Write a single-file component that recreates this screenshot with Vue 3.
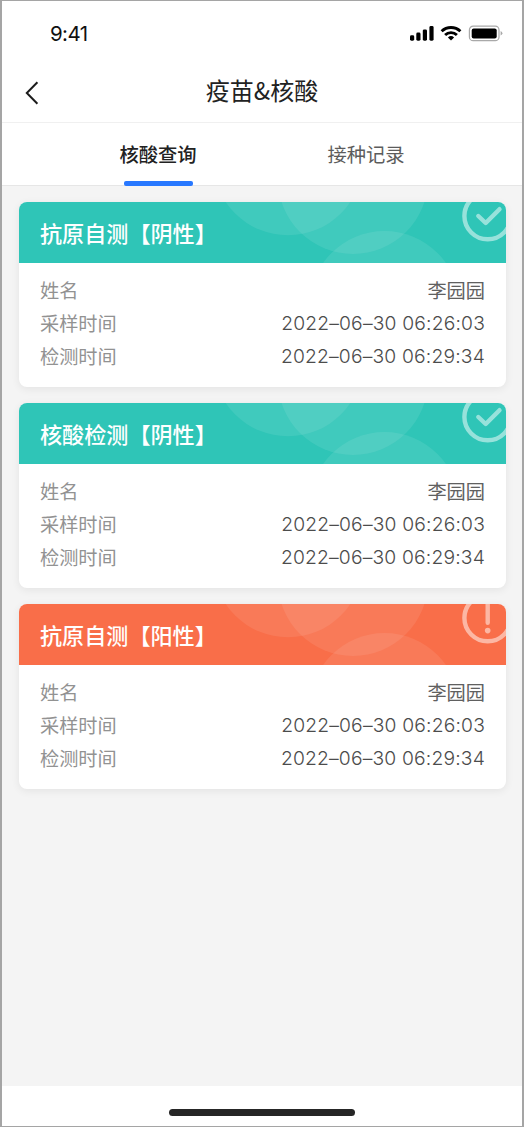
<script setup>
const cards = [
  { id: 1, title: '抗原自测【阴性】', positive: false },
  { id: 2, title: '核酸检测【阴性】', positive: false },
  { id: 3, title: '抗原自测【阳性】', positive: true },
].map((card) => ({
  ...card,
  name: '李园园',
  rows: [
    { label: '采样时间', value: '2022–06–30 06:26:03' },
    { label: '检测时间', value: '2022–06–30 06:29:34' },
  ],
}))
</script>

<template>
  <div class="phone">
    <div class="status">
      <span class="clock">9:41</span>
      <svg class="signals" width="94" height="18" viewBox="0 0 94 18">
        <rect x="0" y="10.3" width="4.2" height="5.4" rx="1.4" />
        <rect x="6.3" y="7.6" width="4.2" height="8.1" rx="1.4" />
        <rect x="12.8" y="4.4" width="4.2" height="11.3" rx="1.4" />
        <rect x="19.4" y="1" width="4.2" height="14.7" rx="1.4" />
        <g fill="none" stroke="#000" stroke-width="2.9">
          <path d="M31.6 6.2a13.6 13.6 0 0 1 18.8 0" />
          <path d="M35.1 10a8.5 8.5 0 0 1 11.8 0" />
        </g>
        <path d="M37.9 12.5a4.6 4.6 0 0 1 6.2 0L41 15.6z" />
        <rect x="59.4" y="1.1" width="29.6" height="14.6" rx="3.8" fill="none" stroke="#a9a9a9" stroke-width="1.2" />
        <rect x="61.7" y="3.4" width="25" height="10" rx="2" />
        <path d="M90.6 6v4.6q1.8-.8 1.8-2.3T90.6 6z" fill="#a9a9a9" />
      </svg>
    </div>
    <header class="nav">
      <svg class="back" width="14" height="24" viewBox="0 0 14 24">
        <path d="M12.4 1.2 1.8 12l10.6 10.8" fill="none" stroke="#1c1c1c" stroke-width="2" />
      </svg>
      <h1>疫苗&amp;核酸</h1>
    </header>
    <nav class="tabs">
      <div class="tab active">核酸查询</div>
      <div class="tab">接种记录</div>
    </nav>
    <main>
      <section v-for="card in cards" :key="card.id" class="card">
        <div class="head" :class="{ positive: card.positive }">
          <svg class="decor" width="487" height="61" viewBox="0 0 487 61">
            <g fill="#fff" fill-opacity=".085">
              <circle cx="269" cy="-41.7" r="75" />
              <circle cx="334" cy="-23" r="75" />
              <circle cx="365.5" cy="104" r="75" />
            </g>
            <g fill="none" stroke="#fff" stroke-opacity=".5" stroke-width="4.4" stroke-linecap="round" stroke-linejoin="round">
              <circle cx="468.7" cy="14" r="23.3" />
              <path v-if="!card.positive" d="m459.3 14 7.4 7 13.8-13.8" />
              <path v-else d="M468.7-2v20.8" />
            </g>
            <circle v-if="card.positive" cx="468.7" cy="26.6" r="2.8" fill="#fff" fill-opacity=".5" />
          </svg>
          <h2>{{ card.title }}</h2>
        </div>
        <dl>
          <div class="row">
            <dt>姓名</dt>
            <dd>{{ card.name }}</dd>
          </div>
          <div v-for="row in card.rows" :key="row.label" class="row">
            <dt>{{ row.label }}</dt>
            <dd class="time">{{ row.value }}</dd>
          </div>
        </dl>
      </section>
    </main>
    <footer><div class="home"></div></footer>
  </div>
</template>

<style>
body {
  background: #fff;
}
</style>

<style scoped>
.phone {
  box-sizing: border-box;
  width: 524px;
  height: 1127px;
  border: 1px solid #a5a5a5;
  border-width: 1px 2px 1px 2px;
  background: #f4f4f4;
  display: flex;
  flex-direction: column;
  font-family: "Liberation Sans", "Noto Sans CJK SC", sans-serif;
}
.status {
  height: 61px;
  flex: none;
  background: #fff;
  display: flex;
  justify-content: space-between;
  align-items: center;
  padding: 4px 18px 0 48px;
  box-sizing: border-box;
}
.clock {
  font: 400 20.5px/24px Inter, sans-serif;
  letter-spacing: -0.6px;
  color: #111;
}
.signals {
  display: block;
}
.nav {
  height: 61px;
  flex: none;
  box-sizing: border-box;
  background: #fff;
  border-bottom: 1px solid #f0f0f0;
  display: grid;
  grid-template-columns: 60px 1fr 60px;
  align-items: center;
}
.back {
  margin: 1px 0 0 23px;
}
h1 {
  margin: 0 0 4px;
  text-align: center;
  font: 400 24px/34px "Noto Sans CJK SC", sans-serif;
  color: #222;
}
.tabs {
  height: 63px;
  flex: none;
  box-sizing: border-box;
  background: #fff;
  border-bottom: 1px solid #e6e6e6;
  display: grid;
  grid-template-columns: 208px 208px;
  justify-content: center;
}
.tab {
  display: flex;
  flex-direction: column;
  align-items: center;
  justify-content: space-between;
  height: 63px;
  padding-top: 17px;
  box-sizing: border-box;
  font: 400 19.3px/28px "Noto Sans CJK SC", sans-serif;
  color: #5c5c5c;
}
.active {
  font-weight: 500;
  color: #222;
}
.active::after {
  content: "";
  width: 69px;
  height: 5px;
  border-radius: 2px;
  background: #2878ff;
}
main {
  flex: 1;
  display: flex;
  flex-direction: column;
  gap: 16px;
  padding: 16px 16px 0 17px;
}
.card {
  height: 185px;
  border-radius: 8px;
  overflow: hidden;
  background: #fff;
  box-shadow: 0 2px 9px rgba(0, 0, 0, 0.07);
}
.head {
  display: grid;
  height: 61px;
  align-items: center;
  background: #2fc5b7;
}
.head.positive {
  background: #f96e49;
}
.decor,
h2 {
  grid-area: 1 / 1;
}
.decor {
  display: block;
}
h2 {
  margin: 0 0 2px 21px;
  font: 500 22.1px/32px "Noto Sans CJK SC", sans-serif;
  font-feature-settings: normal;
  color: #fff;
}
dl {
  margin: 0;
  padding: 10.2px 21px 0;
}
.row {
  height: 33.2px;
  display: flex;
  justify-content: space-between;
  align-items: center;
}
dt {
  font: 400 19.2px/28px "Noto Sans CJK SC", sans-serif;
  color: #929292;
}
dd {
  margin: 0;
  font: 400 19.2px/28px "Noto Sans CJK SC", sans-serif;
  color: #606060;
}
.time {
  font: 300 19.3px/28px Inter, sans-serif;
  letter-spacing: 0.17px;
  color: #4c4c4c;
}
footer {
  height: 40px;
  flex: none;
  background: #fff;
  display: flex;
  justify-content: center;
}
.home {
  width: 186px;
  height: 7px;
  margin-top: 23px;
  border-radius: 4px;
  background: #262626;
}
</style>
